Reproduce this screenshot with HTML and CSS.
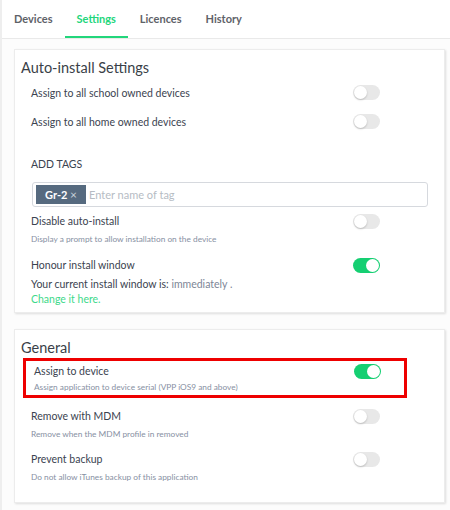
FILE: index.html
```html
<!DOCTYPE html>
<html>
<head>
<meta charset="utf-8">
<link rel="stylesheet" href="styles.css">
</head>
<body>
<div class="page">
  <nav class="tabs">
    <div class="tab">Devices</div>
    <div class="tab active">Settings</div>
    <div class="tab">Licences</div>
    <div class="tab">History</div>
  </nav>
  <div class="content">
    <section class="card card-auto">
      <h2 class="card-title">Auto-install Settings</h2>
      <div class="row simple">
        <span class="label">Assign to all school owned devices</span>
        <span class="toggle"></span>
      </div>
      <div class="row simple">
        <span class="label">Assign to all home owned devices</span>
        <span class="toggle"></span>
      </div>
      <div class="add-tags">ADD TAGS</div>
      <div class="tag-input">
        <span class="chip">Gr-2 <span class="chip-x">×</span></span>
        <span class="placeholder">Enter name of tag</span>
      </div>
      <div class="row">
        <div class="row-main">
          <span class="label">Disable auto-install</span>
          <span class="toggle"></span>
        </div>
        <div class="sub">Display a prompt to allow installation on the device</div>
      </div>
      <div class="row honour">
        <div class="row-main">
          <span class="label">Honour install window</span>
          <span class="toggle on"></span>
        </div>
        <div class="window-text">Your current install window is: <span class="muted">immediately .</span></div>
        <div class="link">Change it here.</div>
      </div>
    </section>
    <section class="card card-general">
      <h2 class="card-title">General</h2>
      <div class="row highlight">
        <div class="row-main">
          <span class="label">Assign to device</span>
          <span class="toggle on"></span>
        </div>
        <div class="sub">Assign application to device serial (VPP iOS9 and above)</div>
      </div>
      <div class="row">
        <div class="row-main">
          <span class="label">Remove with MDM</span>
          <span class="toggle"></span>
        </div>
        <div class="sub">Remove when the MDM profile in removed</div>
      </div>
      <div class="row">
        <div class="row-main">
          <span class="label">Prevent backup</span>
          <span class="toggle"></span>
        </div>
        <div class="sub">Do not allow iTunes backup of this application</div>
      </div>
    </section>
  </div>
</div>
</body>
</html>
```
FILE: styles.css
```css
* { box-sizing: border-box; }
html, body { margin: 0; padding: 0; }
body {
  width: 450px;
  height: 510px;
  overflow: hidden;
  background: #fff;
  font-family: Lato, "Open Sans", sans-serif;
  color: #3b4350;
}
.page {
  border-left: 2px solid #eeeeee;
  min-height: 510px;
  background: #fcfcfc;
}
.tabs {
  display: flex;
  height: 39px;
  border-bottom: 1px solid #e9e9e9;
  background: #fff;
}
.tab {
  font-size: 11px;
  font-weight: 700;
  color: #5e6268;
  padding: 0 12px;
  line-height: 37px;
  border-bottom: 2px solid transparent;
}
.tab.active {
  color: #22d67b;
  border-bottom-color: #22d67b;
}
.content {
  padding: 10px 5px 0 12px;
  display: flex;
  flex-direction: column;
  gap: 16px;
}
.card {
  background: #fff;
  border: 1px solid #ececec;
  box-shadow: 1px 1px 2px rgba(0,0,0,0.12);
  padding: 8px 16px 0 6px;
}
.card-auto { height: 264px; }
.card-general { height: 174px; }
.card-title {
  margin: 0;
  font-size: 14.5px;
  font-weight: 400;
  color: #3a3f48;
  line-height: 20px;
}
.row { padding-left: 10px; }
.row-main, .row.simple {
  display: flex;
  justify-content: space-between;
  align-items: center;
}
.row.simple { height: 29px; padding-right: 48px; }
.row-main { height: 18px; padding-right: 48px; }
.label { font-size: 10.5px; color: #3b4350; }
.toggle {
  display: inline-block;
  width: 27px;
  height: 15px;
  border-radius: 8px;
  background: #e8e8e8;
  position: relative;
}
.toggle::after {
  content: "";
  position: absolute;
  top: 1px; left: 1px;
  width: 13px; height: 13px;
  border-radius: 50%;
  background: #fff;
  box-shadow: 0 1px 2px rgba(0,0,0,0.2);
}
.toggle.on { background: #15cf72; }
.toggle.on::after { left: 13px; box-shadow: none; }
.add-tags {
  padding-left: 10px;
  font-size: 10.5px;
  color: #3b4350;
  margin-top: 21px;
  line-height: 14px;
}
.tag-input {
  margin: 11px 0 0 11px;
  height: 25px;
  border: 1px solid #d6d9de;
  border-radius: 3px;
  display: flex;
  align-items: center;
  padding-left: 3px;
  width: 396px;
}
.chip {
  background: #566a7f;
  color: #fff;
  font-size: 11px;
  font-weight: 700;
  height: 19px;
  line-height: 19px;
  padding: 0 0 0 9px;
  width: 50px;
  white-space: nowrap;
}
.chip-x { font-weight: 400; color: #c9d1da; font-size: 12px; }
.placeholder { font-size: 11px; color: #b6bcc4; margin-left: 3px; }
.sub {
  font-size: 8.3px;
  color: #8790a3;
  margin-top: 2px;
  line-height: 14px;
}
.card-auto .row:not(.simple) { margin-top: 5px; }
.card-auto .row.honour { margin-top: 10px; }
.window-text { font-size: 10.5px; color: #3b4350; margin-top: 3px; line-height: 14px; }
.muted { color: #7d8696; }
.link { font-size: 10.5px; color: #3ed98a; line-height: 14px; margin-top: 1px; }
.card-general .row { margin-top: 9px; }
.card-general .row.highlight {
  margin-top: 0;
  margin-left: 2px;
  padding-left: 8px;
  border: 3px solid #ee0000;
  width: 384px;
  height: 40px;
  padding-top: 1px;
}
.card-general .row.highlight .row-main { padding-right: 23px; }
.card-general .row.highlight .sub { margin-top: 0; }
```
